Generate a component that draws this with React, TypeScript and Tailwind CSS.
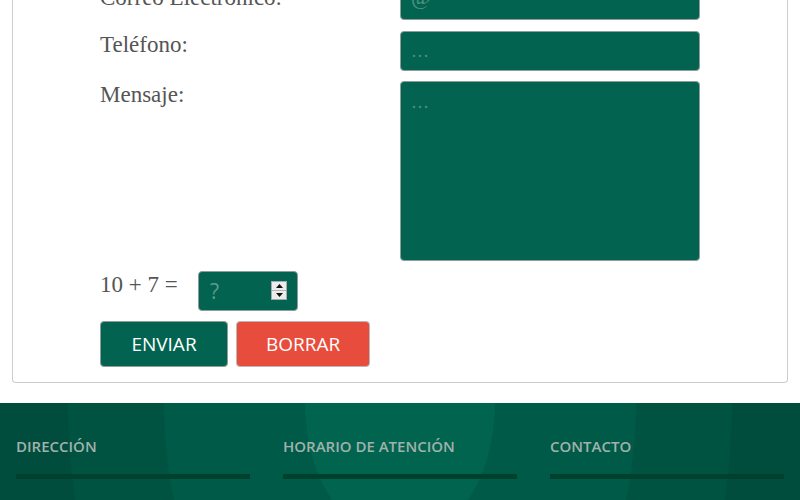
import React from "react";

const serif = { fontFamily: '"Liberation Serif", "Times New Roman", serif' };

function Row({
  label,
  children,
  className = "",
  labelCls = "-mt-[2px]",
}: {
  label: string;
  children: React.ReactNode;
  className?: string;
  labelCls?: string;
}) {
  return (
    <div className={"flex " + className}>
      <label className={labelCls + " w-[300px] shrink-0 text-[23px] leading-[31px] text-[#555]"} style={serif}>
        {label}
      </label>
      {children}
    </div>
  );
}

const inputCls =
  "w-[300px] rounded-[4px] border border-[#8f9c98] bg-[#026450] px-[10px] text-[18px] text-white outline-none placeholder:text-[#4f9281]";

export default function App() {
  return (
    <div className="h-[500px] w-[800px] overflow-hidden bg-white">
      <div className="mx-[12px] rounded-b-[4px] border border-t-0 border-[#cccccc] pb-[15px] pl-[87px]">
        <div className="-mt-[21px] flex flex-col">
          <Row label="Correo Electrónico:" labelCls="mt-[3px]">
            <input className={inputCls + " h-[41px] pb-[6px] text-[22px]"} placeholder="@" style={serif} />
          </Row>
          <Row label="Teléfono:" className="mt-[11px]">
            <input className={inputCls + " h-[40px]"} placeholder="…" style={serif} />
          </Row>
          <Row label="Mensaje:" className="mt-[10px]">
            <textarea
              className={inputCls + " h-[180px] resize-none pt-[8px] leading-[24px]"}
              placeholder="…"
              style={serif}
            />
          </Row>
          <div className="mt-[10px] flex items-start">
            <span className="-mt-[2px] w-[98px] text-[23px] leading-[31px] text-[#555]" style={serif}>
              10 + 7 =
            </span>
            <div className="relative">
              <input
                type="text"
                className="h-[40px] w-[100px] rounded-[4px] border border-[#8f9c98] bg-[#026450] px-[11px] text-[21px] text-white outline-none placeholder:text-[#5f9a8b]"
                placeholder="?"
                style={{ fontFamily: '"Open Sans", "Liberation Sans", sans-serif' }}
              />
              <div className="absolute left-[73px] top-[10px] flex h-[19px] w-[16px] flex-col border border-[#a9a9a9] bg-[#ececec]">
                <div className="flex h-1/2 items-center justify-center border-b border-[#b5b5b5]">
                  <svg width="7" height="4" viewBox="0 0 7 4"><path d="M3.5 0L7 4H0z" fill="#111" /></svg>
                </div>
                <div className="flex h-1/2 items-center justify-center">
                  <svg width="7" height="4" viewBox="0 0 7 4"><path d="M0 0h7L3.5 4z" fill="#111" /></svg>
                </div>
              </div>
            </div>
          </div>
          <div className="mt-[10px] flex gap-[8px]" style={{ fontFamily: '"Open Sans", "Liberation Sans", sans-serif' }}>
            <button className="h-[46px] w-[128px] rounded-[4px] border border-[#8f9c98] bg-[#026450] text-[19px] text-white">
              ENVIAR
            </button>
            <button className="h-[46px] w-[134px] rounded-[4px] border border-[#b9b9b9] bg-[#e74c3c] text-[19px] text-white">
              BORRAR
            </button>
          </div>
        </div>
      </div>

      <footer className="relative mt-[20px] h-[200px] overflow-hidden bg-[#004d3d]">
        <div className="absolute left-[68px] top-[-473px] h-[946px] w-[664px] rounded-[50%] bg-[#005341]" />
        <div className="absolute left-[164px] top-[-337px] h-[674px] w-[472px] rounded-[50%] bg-[#005a48]" />
        <div className="absolute left-[305px] top-[-139px] h-[278px] w-[190px] rounded-[50%] bg-[#00644f]" />
        <div
          className="relative grid grid-cols-3 gap-[33px] px-[16px] pt-[33px]"
          style={{ fontFamily: '"Open Sans", "Liberation Sans", sans-serif' }}
        >
          {["DIRECCIÓN", "HORARIO DE ATENCIÓN", "CONTACTO"].map((t) => (
            <div key={t}>
              <h3 className="text-[15px] font-semibold leading-[20px] text-[#a1b2ac]">{t}</h3>
              <div className="mt-[18px] h-[5px] bg-[#00402f]" />
            </div>
          ))}
        </div>
      </footer>
    </div>
  );
}
